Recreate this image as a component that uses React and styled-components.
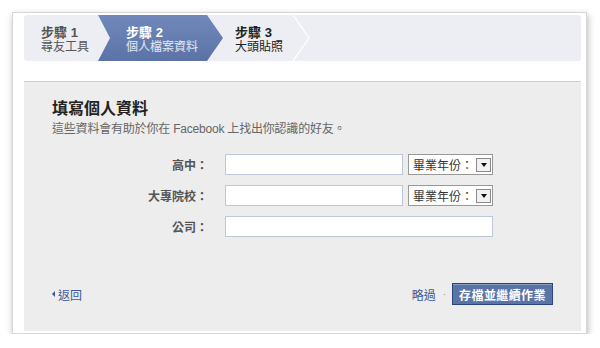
import styled, { createGlobalStyle } from 'styled-components';

const GlobalStyle = createGlobalStyle`
    body {
        margin: 0;
        background: #fff;
        font-family: "Liberation Sans", "Noto Sans CJK TC", sans-serif;
    }
`

const Card = styled.div`
    box-sizing: border-box;
    margin: 12px 0 0 12px;
    width: 575px;
    height: 322px;
    padding: 2px 5px 0 11px;
    background: #fff;
    border: 1px solid #d6d6d6;
    box-shadow: 1px 3px 7px rgba(0, 0, 0, 0.28);
    display: flex;
    flex-direction: column;
`
const StepBar = styled.div`
    display: flex;
    height: 46px;
    background: #eceef4;
    border-radius: 3px;
`
const Step = styled.div`
    box-sizing: border-box;
    width: ${p => p.$w}px;
    padding: 10px 0 0 ${p => p.$pl}px;
    line-height: 15px;
    color: ${p => (p.$active ? '#fff' : p.$done ? '#555' : '#222')};
    ${p => p.$active && `
        background: linear-gradient(#7189ba, #5a72a6);
        clip-path: polygon(0 0, 109px 0, 125px 23px, 109px 46px, 0 46px, 12px 23px);
    `}
`
const StepNum = styled.div`
    font-size: 13px;
    font-weight: bold;
`
const StepName = styled.div`
    font-size: 12px;
    color: ${p => (p.$active ? '#e4e9f3' : 'inherit')};
`
const Sep = styled.svg`
    display: block;
    width: 18px;
    height: 46px;
`
const Panel = styled.div`
    margin-top: 20px;
    height: 250px;
    box-sizing: border-box;
    background: #ededed;
    border-top: 1px solid #cdcdcd;
    padding: 17px 28px 0 28px;
`
const Title = styled.h2`
    margin: 0;
    font-size: 16px;
    line-height: 20px;
    font-weight: bold;
    color: #222;
`
const Sub = styled.p`
    margin: 3px 0 0;
    font-size: 12px;
    line-height: 15px;
    color: #666;
    letter-spacing: -0.2px;
`
const Form = styled.div`
    margin-top: 17px;
    display: grid;
    grid-template-columns: 156px auto;
    column-gap: 17px;
    row-gap: 10px;
    align-items: center;
`
const Label = styled.div`
    text-align: right;
    font-size: 12px;
    font-weight: bold;
    color: #555;
`
const Fields = styled.div`
    display: flex;
    gap: 5px;
`
const Input = styled.input`
    box-sizing: border-box;
    width: ${p => p.$w}px;
    height: 21px;
    border: 1px solid #bdc7d8;
    background: #fff;
    margin: 0;
    padding: 2px 3px;
`
const Select = styled.div`
    box-sizing: border-box;
    width: 85px;
    height: 21px;
    border: 1px solid #999;
    background: #fff;
    display: flex;
    align-items: center;
    justify-content: space-between;
    padding: 0 1px 0 4px;
    font-size: 12px;
    color: #333;
`
const Arrow = styled.span`
    box-sizing: border-box;
    width: 15px;
    height: 14px;
    border: 1px solid #8a8a8a;
    background: #f2f2f2;
    display: flex;
    align-items: center;
    justify-content: center;
    &::after {
        content: '';
        border-left: 3.5px solid transparent;
        border-right: 3.5px solid transparent;
        border-top: 4px solid #111;
    }
`
const Footer = styled.div`
    margin-top: 46px;
    display: flex;
    align-items: center;
    justify-content: space-between;
    height: 22px;
`
const Link = styled.a`
    color: #3b5998;
    font-size: 12px;
    text-decoration: none;
    display: flex;
    align-items: center;
    gap: 3px;
`
const Back = styled.span`
    border-top: 3.5px solid transparent;
    border-bottom: 3.5px solid transparent;
    border-right: 3.5px solid #3b5998;
`
const Actions = styled.div`
    display: flex;
    align-items: center;
`
const Dot = styled.span`
    color: #999;
    font-size: 10px;
    margin: 0 6px 0 7px;
`
const Button = styled.button`
    box-sizing: border-box;
    width: 101px;
    height: 22px;
    margin: 0;
    padding: 0;
    background: #5b74a8;
    border: 1px solid #29447e;
    box-shadow: inset 0 1px 0 #8a9cc2;
    color: #fff;
    font-family: inherit;
    font-size: 12px;
    font-weight: bold;
    letter-spacing: 0.4px;
`

const steps = [
    { num: '1', name: '尋友工具', w: 74, pl: 17, done: true },
    { num: '2', name: '個人檔案資料', w: 125, pl: 28, active: true },
    { num: '3', name: '大頭貼照', w: 70, pl: 12 },
]

const App = () => {
    return (
        <>
            <GlobalStyle />
            <Card>
                <StepBar>
                    {steps.map(s => (
                        <Step key={s.num} $w={s.w} $pl={s.pl} $active={s.active} $done={s.done}>
                            <StepNum>步驟 {s.num}</StepNum>
                            <StepName $active={s.active}>{s.name}</StepName>
                        </Step>
                    ))}
                    <Sep viewBox="0 0 18 46">
                        <polyline points="0,0 16,23 0,46" fill="none" stroke="#fff" strokeWidth="1.2" />
                    </Sep>
                </StepBar>
                <Panel>
                    <Title>填寫個人資料</Title>
                    <Sub>這些資料會有助於你在 Facebook 上找出你認識的好友。</Sub>
                    <Form>
                        <Label>高中：</Label>
                        <Fields>
                            <Input $w={178} />
                            <Select>畢業年份：<Arrow /></Select>
                        </Fields>
                        <Label>大專院校：</Label>
                        <Fields>
                            <Input $w={178} />
                            <Select>畢業年份：<Arrow /></Select>
                        </Fields>
                        <Label>公司：</Label>
                        <Fields>
                            <Input $w={268} />
                        </Fields>
                    </Form>
                    <Footer>
                        <Link href="#"><Back />返回</Link>
                        <Actions>
                            <Link href="#">略過</Link>
                            <Dot>·</Dot>
                            <Button>存檔並繼續作業</Button>
                        </Actions>
                    </Footer>
                </Panel>
            </Card>
        </>
    )
}

export default App;
